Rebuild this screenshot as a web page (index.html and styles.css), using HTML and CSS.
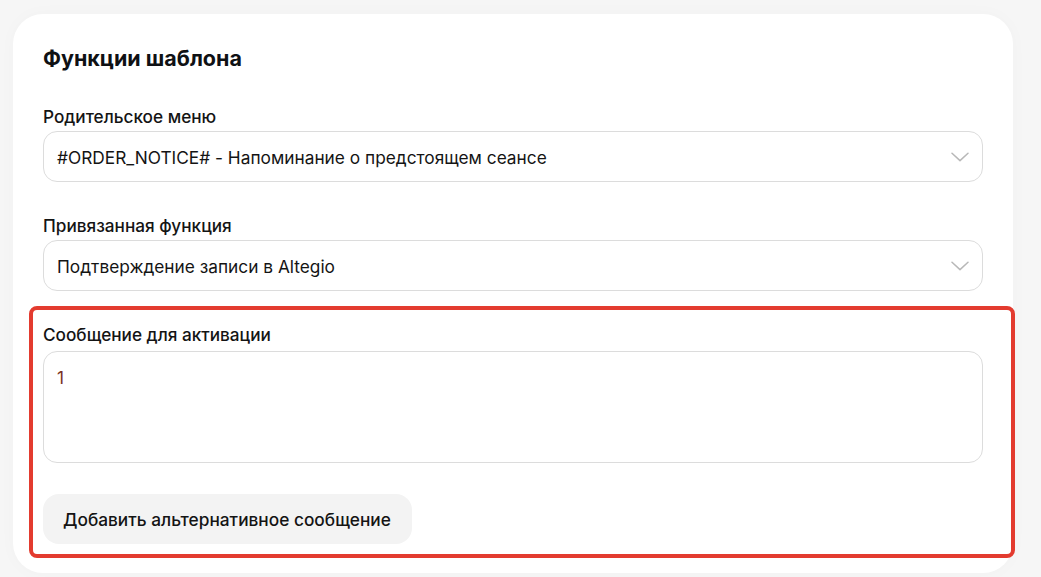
FILE: index.html
```html
<!DOCTYPE html>
<html lang="ru">
<head>
<meta charset="utf-8">
<link rel="stylesheet" href="styles.css">
</head>
<body>
<div class="card">
  <h2 class="title">Функции шаблона</h2>

  <div class="field">
    <div class="label">Родительское меню</div>
    <div class="select">
      <span class="select-text">#ORDER_NOTICE# - Напоминание о предстоящем сеансе</span>
      <svg class="chevron" width="18" height="10" viewBox="0 0 18 10"><path d="M1 1.2 L9 8.6 L17 1.2" fill="none" stroke="#b8b8b8" stroke-width="1.5" stroke-linecap="round" stroke-linejoin="round"/></svg>
    </div>
  </div>

  <div class="field">
    <div class="label">Привязанная функция</div>
    <div class="select">
      <span class="select-text">Подтверждение записи в Altegio</span>
      <svg class="chevron" width="18" height="10" viewBox="0 0 18 10"><path d="M1 1.2 L9 8.6 L17 1.2" fill="none" stroke="#b8b8b8" stroke-width="1.5" stroke-linecap="round" stroke-linejoin="round"/></svg>
    </div>
  </div>

  <div class="field highlighted">
    <div class="label">Сообщение для активации</div>
    <div class="textarea"><span class="typed">1</span></div>
    <button class="alt-btn">Добавить альтернативное сообщение</button>
  </div>
</div>
</body>
</html>
```

FILE: styles.css
```css
* { box-sizing: border-box; }

html, body {
  margin: 0;
  padding: 0;
  background: #f6f6f6;
}

body {
  font-family: Inter, "Noto Sans", sans-serif;
  color: #141414;
  width: 1041px;
  height: 577px;
  overflow: hidden;
}

.card {
  margin: 14px 0 0 13px;
  width: 1000px;
  height: 559px;
  background: #ffffff;
  border-radius: 30px;
  padding: 31px 30px 0 30px;
  box-shadow: 0 0 18px rgba(0, 0, 0, 0.025);
  display: flex;
  flex-direction: column;
}

.title {
  margin: 0;
  font-size: 21.5px;
  line-height: 26px;
  font-weight: 700;
  color: #0f1114;
}

.field {
  display: flex;
  flex-direction: column;
  gap: 4px;
}

.title + .field { margin-top: 35px; }
.field + .field { margin-top: 33px; }

.label {
  font-size: 17.2px;
  line-height: 21px;
  font-weight: 500;
  color: #141414;
}

.select {
  height: 51px;
  border: 1px solid #dcdcdc;
  border-radius: 14px;
  display: flex;
  align-items: center;
  justify-content: space-between;
  padding: 2px 13px 0 13px;
}

.select-text {
  font-size: 17.3px;
  color: #141414;
}

.chevron { display: block; margin-top: -2px; }

.highlighted {
  position: relative;
  gap: 6px;
}

.highlighted::before {
  content: "";
  position: absolute;
  left: -14px;
  right: -32px;
  top: -18px;
  bottom: -14px;
  border: 4.5px solid #e33b2f;
  border-radius: 8px;
  pointer-events: none;
}

.textarea {
  height: 112px;
  border: 1px solid #dcdcdc;
  border-radius: 14px;
  padding: 15px 13px;
  font-size: 17.2px;
  line-height: 21px;
}

.typed { color: #7a3324; }

.alt-btn {
  align-self: flex-start;
  margin-top: 25px;
  height: 50px;
  width: 369px;
  border: none;
  border-radius: 16px;
  background: #f3f3f3;
  font-family: inherit;
  font-size: 17.3px;
  font-weight: 500;
  color: #141414;
  padding: 0 20px;
  text-align: left;
}
```
